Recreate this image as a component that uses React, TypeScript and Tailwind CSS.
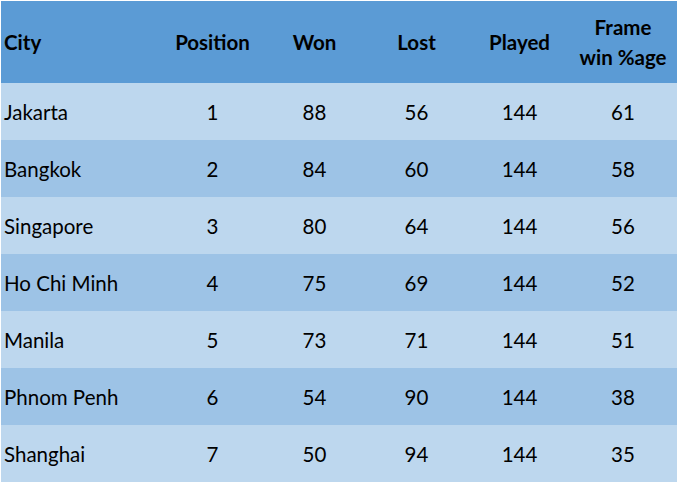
import React from "react";

const rows: [string, number, number, number, number, number][] = [
  ["Jakarta", 1, 88, 56, 144, 61],
  ["Bangkok", 2, 84, 60, 144, 58],
  ["Singapore", 3, 80, 64, 144, 56],
  ["Ho Chi Minh", 4, 75, 69, 144, 52],
  ["Manila", 5, 73, 71, 144, 51],
  ["Phnom Penh", 6, 54, 90, 144, 38],
  ["Shanghai", 7, 50, 94, 144, 35],
];

export default function App() {
  return (
    <div
      className="w-[677px] h-[483px] bg-white pt-px pl-px text-black text-[20.5px] leading-none"
      style={{ fontFamily: "Lato, 'Open Sans', sans-serif" }}
    >
      <div className="flex h-[82px] items-center bg-[#5b9bd5] font-bold">
        <div className="w-[160px] pl-[3px]">City</div>
        <div className="w-[103px] text-center">Position</div>
        <div className="w-[101px] text-center">Won</div>
        <div className="w-[103px] text-center">Lost</div>
        <div className="w-[103px] text-center">Played</div>
        <div className="w-[104px] text-center leading-[30px]">
          Frame
          <br />
          win %age
        </div>
      </div>
      {rows.map((r, i) => (
        <div
          key={r[0]}
          className={`flex h-[57px] items-center pt-[2px] ${i % 2 === 0 ? "bg-[#bdd7ee]" : "bg-[#9dc3e6]"}`}
        >
          <div className="w-[160px] pl-[3px]">{r[0]}</div>
          <div className="w-[103px] text-center">{r[1]}</div>
          <div className="w-[101px] text-center">{r[2]}</div>
          <div className="w-[103px] text-center">{r[3]}</div>
          <div className="w-[103px] text-center">{r[4]}</div>
          <div className="w-[104px] text-center">{r[5]}</div>
        </div>
      ))}
    </div>
  );
}
